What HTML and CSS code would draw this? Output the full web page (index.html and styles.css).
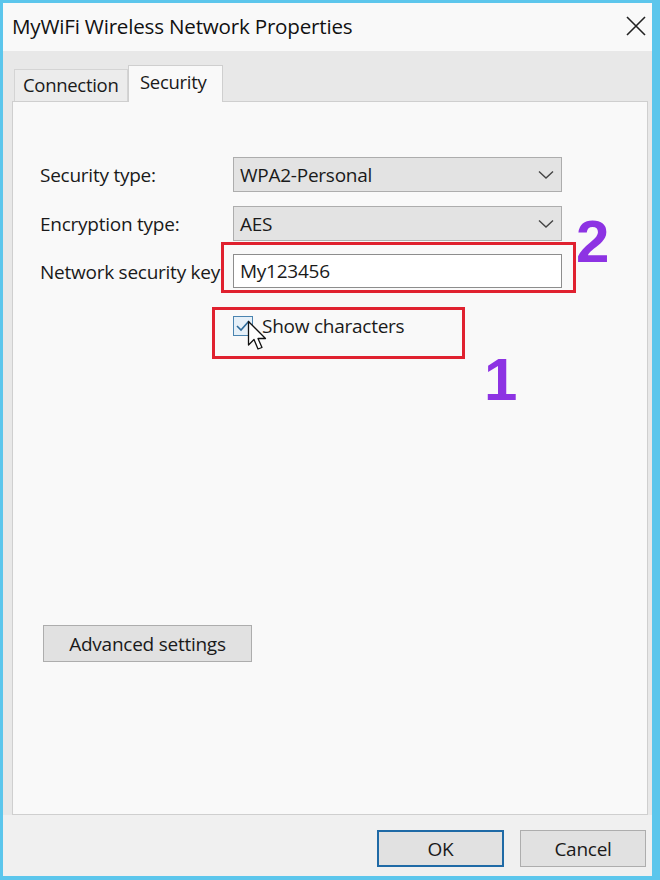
FILE: index.html
```html
<!DOCTYPE html>
<html>
<head>
<meta charset="utf-8">
<link rel="stylesheet" href="styles.css">
</head>
<body>
<div class="window">
  <div class="titlebar">
    <span class="title">MyWiFi Wireless Network Properties</span>
    <svg class="close" width="20" height="20" viewBox="0 0 20 20"><path d="M1 1 L19 19 M19 1 L1 19" stroke="#222" stroke-width="1.6" fill="none"/></svg>
  </div>
  <div class="dialog">
    <div class="tabs">
      <div class="tab">Connection</div>
      <div class="tab active">Security</div>
    </div>
    <div class="panel">
      <div class="form">
        <div class="row">
          <span class="label">Security type:</span>
          <div class="select"><span>WPA2-Personal</span><svg width="16" height="10" viewBox="0 0 16 10"><path d="M1 1.5 L8 8 L15 1.5" stroke="#444" stroke-width="1.4" fill="none"/></svg></div>
        </div>
        <div class="row">
          <span class="label">Encryption type:</span>
          <div class="select"><span>AES</span><svg width="16" height="10" viewBox="0 0 16 10"><path d="M1 1.5 L8 8 L15 1.5" stroke="#444" stroke-width="1.4" fill="none"/></svg></div>
        </div>
        <div class="row">
          <span class="label">Network security key</span>
          <div class="input">My123456</div>
        </div>
      </div>
      <div class="check-row">
        <span class="checkbox"><svg width="18" height="18" viewBox="0 0 18 18"><path d="M3 9 L7 13 L15 4" stroke="#2d6a9a" stroke-width="1.6" fill="none"/></svg></span>
        <span class="check-label">Show characters</span>
      </div>
      <div class="adv-wrap">
        <div class="button adv">Advanced settings</div>
      </div>

      <div class="mark mark-2"></div>
      <div class="num num-2">2</div>
      <div class="mark mark-1"></div>
      <div class="num num-1">1</div>
      <svg class="cursor" width="24" height="34" viewBox="0 0 24 34"><path d="M1.5 1.5 L1.5 25 L7 19.5 L11 29 L15 27.5 L11 18.5 L18.5 18.5 Z" fill="#fff" stroke="#111" stroke-width="1.3" stroke-linejoin="round"/></svg>
    </div>
    <div class="footer">
      <div class="button ok">OK</div>
      <div class="button">Cancel</div>
    </div>
  </div>
</div>
</body>
</html>
```
FILE: styles.css
```css
html, body {
  margin: 0;
  padding: 0;
}
body {
  width: 660px;
  height: 880px;
  background: #5cc6ec;
  font-family: "Open Sans", "Noto Sans", sans-serif;
  color: #1a1a1a;
}
.window {
  box-sizing: border-box;
  width: 660px;
  height: 880px;
  border-style: solid;
  border-color: #5cc6ec;
  border-width: 3px 8px 4px 3px;
  display: flex;
  flex-direction: column;
}
.titlebar {
  height: 45px;
  background: #f9f9f9;
  display: flex;
  align-items: center;
  justify-content: space-between;
  padding: 0 6px 3px 9px;
  flex: none;
}
.title {
  font-size: 20.6px;
  letter-spacing: -0.2px;
  color: #111;
}
.dialog {
  flex: 1;
  background: #e8e8e8;
  display: flex;
  flex-direction: column;
  padding: 14px 4px 0 9px;
}
.tabs {
  display: flex;
  align-items: flex-end;
  height: 36px;
  padding-left: 2px;
  position: relative;
  z-index: 1;
}
.tab {
  box-sizing: border-box;
  height: 32px;
  padding: 0 8px;
  font-size: 18.5px;
  line-height: 30px;
  letter-spacing: -0.3px;
  background: #ececec;
  border: 1px solid #d4d4d4;
  border-bottom: none;
  width: 114px;
  white-space: nowrap;
}
.tab.active {
  height: 37px;
  width: 95px;
  margin-bottom: -1px;
  background: #f9f9f9;
  border-color: #cfcfcf;
  padding-left: 11px;
  line-height: 32px;
}
.panel {
  position: relative;
  box-sizing: border-box;
  height: 714px;
  background: #f9f9f9;
  border: 1px solid #cfcfcf;
  padding: 55px 0 0 27px;
}
.form {
  display: flex;
  flex-direction: column;
  gap: 14px;
}
.row {
  display: flex;
  align-items: center;
}
.label {
  width: 193px;
  font-size: 19px;
  letter-spacing: -0.25px;
  white-space: nowrap;
  overflow: hidden;
}
.select, .input {
  box-sizing: border-box;
  width: 329px;
  height: 35px;
  font-size: 19px;
  letter-spacing: -0.25px;
  display: flex;
  align-items: center;
  padding-left: 6px;
}
.select {
  background: #e3e3e3;
  border: 1px solid #adadad;
  justify-content: space-between;
  padding-right: 7px;
}
.input {
  background: #fff;
  border: 1px solid #8d8d8d;
  height: 34px;
  margin-top: -1px;
}
.check-row {
  display: flex;
  align-items: center;
  margin: 27px 0 0 193px;
  height: 22px;
}
.checkbox {
  box-sizing: border-box;
  width: 20px;
  height: 20px;
  border: 1px solid #4a84b0;
  background: #e6f0f8;
  display: flex;
  align-items: center;
  justify-content: center;
  margin-right: 9px;
}
.check-label {
  font-size: 19px;
  letter-spacing: -0.25px;
}
.adv-wrap {
  margin: 288px 0 0 3px;
}
.button {
  box-sizing: border-box;
  width: 126px;
  height: 37px;
  background: #e1e1e1;
  border: 1px solid #adadad;
  display: flex;
  align-items: center;
  justify-content: center;
  font-size: 19px;
  letter-spacing: -0.25px;
}
.adv {
  width: 209px;
}
.mark {
  position: absolute;
  border: 3.5px solid #e0212f;
}
.mark-2 {
  left: 208px;
  top: 140px;
  width: 349px;
  height: 45px;
}
.mark-1 {
  left: 199px;
  top: 205px;
  width: 247px;
  height: 46px;
}
.num {
  position: absolute;
  font-family: "Liberation Sans", Arial, sans-serif;
  font-weight: bold;
  color: #8d33e3;
  font-size: 60px;
  line-height: 1;
}
.num-2 {
  left: 563px;
  top: 110px;
}
.num-1 {
  left: 471px;
  top: 248px;
}
.cursor {
  position: absolute;
  left: 234px;
  top: 218px;
}
.footer {
  flex: 1;
  display: flex;
  justify-content: flex-end;
  gap: 16px;
  padding: 15px 6px 0 0;
  background: #f0f0f0;
  margin: 0 -4px 0 -9px;
}
.ok {
  border: 2px solid #1f6aa6;
  width: 127px;
}
```
